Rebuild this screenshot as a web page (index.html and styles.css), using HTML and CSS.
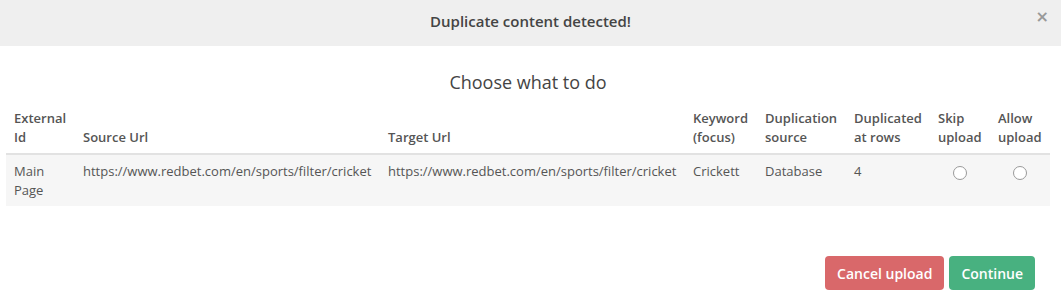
FILE: index.html
```html
<!DOCTYPE html>
<html lang="en">
<head>
    <meta charset="UTF-8">
    <title>Duplicate content detected</title>
    <link rel="stylesheet" href="styles.css">
</head>
<body>
    <div class="modal">
        <div class="modal-header">
            <h4 class="modal-title">Duplicate content detected!</h4>
            <button class="close">&times;</button>
        </div>
        <div class="modal-body">
            <h3 class="choose">Choose what to do</h3>
            <table class="dup-table">
                <colgroup>
                    <col style="width: 69px">
                    <col style="width: 305px">
                    <col style="width: 305px">
                    <col style="width: 72px">
                    <col style="width: 89px">
                    <col style="width: 84px">
                    <col style="width: 60px">
                    <col style="width: 60px">
                </colgroup>
                <thead>
                    <tr>
                        <th>External Id</th>
                        <th>Source Url</th>
                        <th>Target Url</th>
                        <th>Keyword (focus)</th>
                        <th>Duplication source</th>
                        <th>Duplicated at rows</th>
                        <th>Skip upload</th>
                        <th>Allow upload</th>
                    </tr>
                </thead>
                <tbody>
                    <tr>
                        <td>Main Page</td>
                        <td>https://www.redbet.com/en/sports/filter/cricket</td>
                        <td>https://www.redbet.com/en/sports/filter/cricket</td>
                        <td>Crickett</td>
                        <td>Database</td>
                        <td>4</td>
                        <td class="radio-cell"><span class="radio"></span></td>
                        <td class="radio-cell"><span class="radio"></span></td>
                    </tr>
                </tbody>
            </table>
        </div>
        <div class="modal-footer">
            <button class="btn btn-danger">Cancel upload</button>
            <button class="btn btn-success">Continue</button>
        </div>
    </div>
</body>
</html>
```

FILE: styles.css
```css
body {
    margin: 0;
    font-family: 'Open Sans', sans-serif;
    background-color: #ffffff;
    color: #555555;
}

.modal {
    width: 1061px;
}

.modal-header {
    position: relative;
    height: 46px;
    background-color: #efefef;
    display: flex;
    align-items: center;
    justify-content: center;
}

.modal-title {
    margin: 0 0 5px 0;
    font-size: 15px;
    font-weight: 600;
    color: #444444;
}

.close {
    position: absolute;
    top: 9px;
    right: 12px;
    border: none;
    background: none;
    padding: 0;
    font-family: 'DejaVu Sans', sans-serif;
    font-size: 16px;
    font-weight: bold;
    line-height: 1;
    color: #999999;
}

.modal-body {
    padding: 0 11px 0 6px;
}

.choose {
    margin: 24px 0 7px 0;
    text-align: center;
    font-size: 18px;
    font-weight: 400;
    color: #444444;
    line-height: 24px;
}

.dup-table {
    width: 1044px;
    border-collapse: collapse;
    table-layout: fixed;
    font-size: 13px;
    line-height: 18.5px;
}

.dup-table th {
    text-align: left;
    vertical-align: bottom;
    font-weight: 600;
    padding: 8px 8px 7px 8px;
    border-bottom: 2px solid #e2e2e2;
}

.dup-table td {
    vertical-align: top;
    padding: 7px 8px 7px 8px;
    background-color: #f6f6f6;
    color: #555555;
}

.radio-cell {
    text-align: center;
}

.radio {
    display: inline-block;
    width: 12px;
    height: 12px;
    margin-top: 4px;
    border: 1px solid #999999;
    border-radius: 50%;
    background-color: #ffffff;
}

.modal-footer {
    display: flex;
    justify-content: flex-end;
    gap: 5px;
    padding: 50px 26px 0 0;
}

.btn {
    border: none;
    border-radius: 4px;
    height: 34px;
    padding: 0 12px;
    font-family: 'Open Sans', sans-serif;
    font-size: 14px;
    font-weight: 600;
    color: #ffffff;
}

.btn-danger {
    background-color: #d9686a;
}

.btn-success {
    background-color: #48b180;
}
```
